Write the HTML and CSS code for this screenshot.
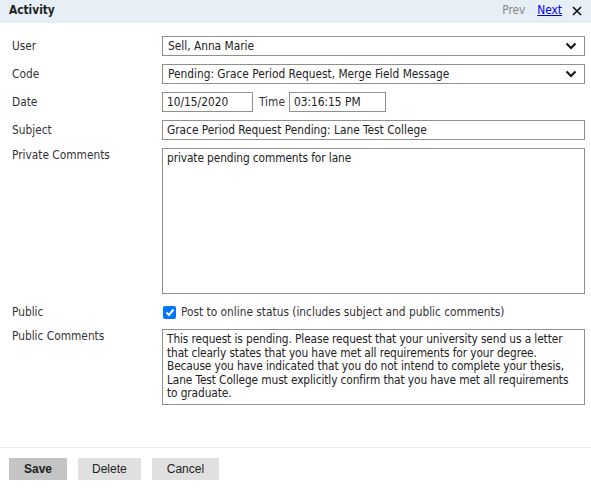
FILE: index.html
```html
<!DOCTYPE html>
<html lang="en">
<head>
  <meta charset="UTF-8" />
  <title>Activity</title>
  <link rel="stylesheet" href="styles.css">
</head>
<body>

<div class="dialog">
  <div class="header">
    <span class="title">Activity</span>
    <span class="nav">
      <span class="prev">Prev</span>
      <a href="#" class="next">Next</a>
      <svg class="close" width="10" height="10" viewBox="0 0 10 10"><path d="M1 1L9 9M9 1L1 9" stroke="#111" stroke-width="1.6"/></svg>
    </span>
  </div>

  <div class="form">
    <label>User</label>
    <div class="select">Sell, Anna Marie
      <svg class="chev" width="12" height="8" viewBox="0 0 12 8"><path d="M1.5 1.5L6 6L10.5 1.5" fill="none" stroke="#111" stroke-width="2"/></svg>
    </div>

    <label>Code</label>
    <div class="select">Pending: Grace Period Request, Merge Field Message
      <svg class="chev" width="12" height="8" viewBox="0 0 12 8"><path d="M1.5 1.5L6 6L10.5 1.5" fill="none" stroke="#111" stroke-width="2"/></svg>
    </div>

    <label>Date</label>
    <div class="datetime">
      <input type="text" class="date" value="10/15/2020">
      <span class="time-label">Time</span>
      <input type="text" class="time" value="03:16:15 PM">
    </div>

    <label>Subject</label>
    <input type="text" class="wide" value="Grace Period Request Pending: Lane Test College">

    <label class="area-label">Private Comments</label>
    <textarea class="private">private pending comments for lane</textarea>

    <label class="public-label">Public</label>
    <div class="check">
      <span class="box"><svg width="10" height="9" viewBox="0 0 10 9"><path d="M1.5 4.5L4 7L8.5 1.5" fill="none" stroke="#fff" stroke-width="2"/></svg></span>
      Post to online status (includes subject and public comments)
    </div>

    <label class="area-label">Public Comments</label>
    <textarea class="public">This request is pending. Please request that your university send us a letter that clearly states that you have met all requirements for your degree. Because you have indicated that you do not intend to complete your thesis, Lane Test College must explicitly confirm that you have met all requirements to graduate.</textarea>
  </div>

  <div class="footer">
    <button class="save">Save</button>
    <button>Delete</button>
    <button class="cancel">Cancel</button>
  </div>
</div>

</body>
</html>
```

FILE: styles.css
```css
body {
  margin: 0;
  font-family: "DejaVu Sans Condensed", "DejaVu Sans", sans-serif;
  font-size: 11.8px;
  color: #333;
  background: #fff;
}

.dialog {
  width: 591px;
  height: 488px;
  display: flex;
  flex-direction: column;
}

.header {
  height: 23px;
  box-sizing: border-box;
  background: #e7eff6;
  display: flex;
  align-items: center;
  justify-content: space-between;
  padding: 0 9px 3px 9px;
}

.title {
  font-weight: bold;
  color: #222;
}

.nav {
  display: flex;
  align-items: center;
  gap: 12px;
}

.prev {
  color: #888;
}

.next {
  color: #0000ee;
}

.close {
  margin-left: -2px;
  margin-top: 2px;
}

.form {
  display: grid;
  grid-template-columns: 150px 423px;
  row-gap: 8px;
  padding: 13px 0 0 12px;
  flex: 1;
  align-content: start;
}

label {
  line-height: 20px;
  color: #333;
}

.area-label {
  line-height: 15px;
}

.select, input, textarea {
  box-sizing: border-box;
  border: 1px solid #8f8f8f;
  font-family: inherit;
  font-size: 11.8px;
  color: #222;
  margin: 0;
}

.select {
  height: 20px;
  padding: 0 5px;
  line-height: 18px;
  display: flex;
  justify-content: space-between;
  align-items: center;
}

.chev {
  margin-right: 2px;
}

input {
  height: 20px;
  padding: 0 4px;
}

.datetime {
  display: flex;
  align-items: center;
}

.date {
  width: 91px;
}

.time-label {
  margin: 0 4px 0 6px;
}

.time {
  width: 97px;
}

.wide {
  width: 423px;
}

textarea {
  resize: none;
  padding: 3px 4px;
  line-height: 13.6px;
  overflow: hidden;
  letter-spacing: -0.1px;
}

.private {
  height: 146px;
}

.public-label {
  margin-top: 1px;
  line-height: 18px;
}

.check {
  margin: 2px 0 -2px;
  height: 16px;
  display: flex;
  align-items: center;
}

.box {
  width: 13px;
  height: 13px;
  border-radius: 2px;
  background: #0075ff;
  display: inline-flex;
  align-items: center;
  justify-content: center;
  margin: 0 5px 0 1px;
}

.public {
  height: 76px;
}

.footer {
  border-top: 1px solid #ebebeb;
  padding: 10px 9px 8px;
  display: flex;
  gap: 11px;
}

button {
  font-family: "Liberation Sans", Arial, sans-serif;
  font-size: 12px;
  height: 22px;
  border: none;
  background: #e0e0e0;
  color: #222;
  padding: 0 14px;
}

button.save {
  background: #c4c4c4;
  font-weight: bold;
  padding: 0 15px;
}

button.cancel {
  padding: 0 15px;
}
```
